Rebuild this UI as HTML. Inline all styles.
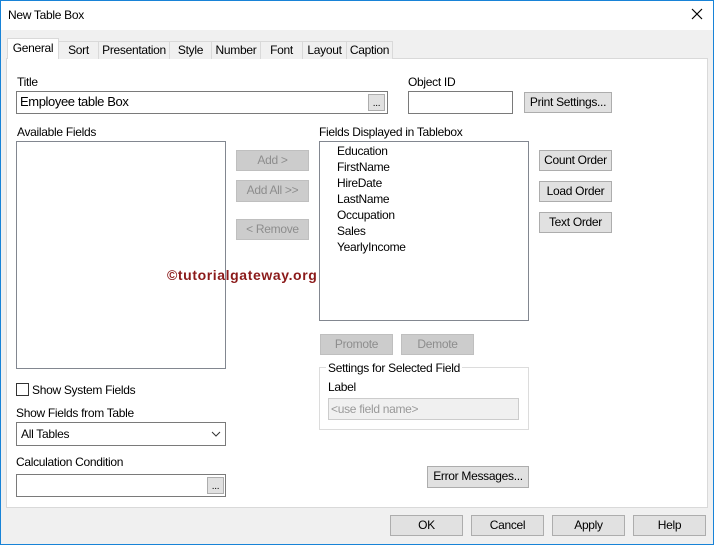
<!DOCTYPE html>
<html><head><style>
*{box-sizing:border-box}
body{margin:0;width:714px;height:545px;overflow:hidden;background:#f0f0f0;font-family:"Liberation Sans",sans-serif;font-size:12px;color:#000;position:relative;letter-spacing:-0.3px}
.a{position:absolute;white-space:nowrap}
.bx{position:absolute;background:#fff;border:1px solid #7a7a7a}
.btn{position:absolute;background:#e1e1e1;border:1px solid #adadad;text-align:center;line-height:18px}
.dis{position:absolute;background:#cccccc;border:1px solid #bfbfbf;color:#8d8d8d;text-align:center;line-height:18px}
.tab{position:absolute;top:41px;height:18px;border:1px solid #d9d9d9;border-bottom:none;background:#f0f0f0;line-height:17px;text-align:center}
</style></head><body>
<div class="a" style="left:0;top:0;width:714px;height:30px;background:#fff"></div>
<div class="a" style="left:0;top:0;width:714px;height:545px;border:1px solid #1883d7;z-index:10;pointer-events:none"></div>
<div class="a" style="left:8px;top:8px;font-size:12px">New Table Box</div>
<svg class="a" style="left:691px;top:8px" width="12" height="12"><path d="M1 1L11 11M11 1L1 11" stroke="#000" stroke-width="1.2"/></svg>

<div class="a" style="left:6px;top:58px;width:702px;height:450px;background:#fff;border:1px solid #d9d9d9"></div>
<div class="tab" style="left:58px;width:41px">Sort</div>
<div class="tab" style="left:98px;width:72px">Presentation</div>
<div class="tab" style="left:169px;width:43px">Style</div>
<div class="tab" style="left:211px;width:50px">Number</div>
<div class="tab" style="left:260px;width:43px">Font</div>
<div class="tab" style="left:302px;width:45px">Layout</div>
<div class="tab" style="left:346px;width:47px">Caption</div>
<div class="tab" style="left:7px;top:38px;width:52px;height:21px;background:#fff;line-height:18px;z-index:2">General</div>

<div class="a" style="left:17px;top:75px">Title</div>
<div class="bx" style="left:16px;top:91px;width:372px;height:23px"></div>
<div class="a" style="left:20px;top:94px;font-size:13px;letter-spacing:-0.4px">Employee table Box</div>
<div class="btn" style="left:368px;top:94px;width:17px;height:17px;line-height:17px;font-size:10px">...</div>

<div class="a" style="left:408px;top:75px">Object ID</div>
<div class="bx" style="left:408px;top:91px;width:105px;height:23px"></div>
<div class="btn" style="left:524px;top:92px;width:88px;height:21px">Print Settings...</div>

<div class="a" style="left:17px;top:125px">Available Fields</div>
<div class="bx" style="left:16px;top:141px;width:210px;height:228px;border-color:#828790"></div>

<div class="dis" style="left:236px;top:150px;width:73px;height:21px">Add &gt;</div>
<div class="dis" style="left:236px;top:180px;width:73px;height:22px">Add All &gt;&gt;</div>
<div class="dis" style="left:236px;top:219px;width:73px;height:21px">&lt; Remove</div>

<div class="a" style="left:319px;top:125px">Fields Displayed in Tablebox</div>
<div class="bx" style="left:319px;top:141px;width:210px;height:180px;border-color:#828790"></div>
<div class="a" style="left:337px;top:143px;line-height:16px">Education<br>FirstName<br>HireDate<br>LastName<br>Occupation<br>Sales<br>YearlyIncome</div>

<div class="btn" style="left:539px;top:150px;width:73px;height:21px">Count Order</div>
<div class="btn" style="left:539px;top:181px;width:73px;height:21px">Load Order</div>
<div class="btn" style="left:539px;top:212px;width:73px;height:21px">Text Order</div>

<div class="a" style="left:167px;top:267px;font-weight:bold;font-size:14px;color:#8b1a1a;letter-spacing:0.6px">©tutorialgateway.org</div>

<div class="dis" style="left:320px;top:334px;width:73px;height:21px">Promote</div>
<div class="dis" style="left:401px;top:334px;width:73px;height:21px">Demote</div>

<div class="a" style="left:319px;top:367px;width:210px;height:63px;border:1px solid #dcdcdc"></div>
<div class="a" style="left:326px;top:361px;background:#fff;padding:0 2px">Settings for Selected Field</div>
<div class="a" style="left:328px;top:380px">Label</div>
<div class="a" style="left:328px;top:398px;width:191px;height:22px;background:#f0f0f0;border:1px solid #ccc;color:#999;padding:3px 2px">&lt;use field name&gt;</div>

<div class="a" style="left:16px;top:383px;width:13px;height:13px;border:1px solid #333;background:#fff"></div>
<div class="a" style="left:32px;top:383px">Show System Fields</div>
<div class="a" style="left:16px;top:406px">Show Fields from Table</div>
<div class="bx" style="left:16px;top:422px;width:210px;height:24px"></div>
<div class="a" style="left:21px;top:427px">All Tables</div>
<svg class="a" style="left:211px;top:430px" width="10" height="8"><path d="M1 2L5 6L9 2" stroke="#333" fill="none"/></svg>
<div class="a" style="left:16px;top:455px">Calculation Condition</div>
<div class="bx" style="left:16px;top:474px;width:210px;height:23px"></div>
<div class="btn" style="left:207px;top:477px;width:17px;height:17px;line-height:17px;font-size:10px">...</div>

<div class="btn" style="left:427px;top:466px;width:102px;height:22px">Error Messages...</div>

<div class="btn" style="left:390px;top:515px;width:73px;height:21px">OK</div>
<div class="btn" style="left:471px;top:515px;width:73px;height:21px">Cancel</div>
<div class="btn" style="left:552px;top:515px;width:73px;height:21px">Apply</div>
<div class="btn" style="left:633px;top:515px;width:73px;height:21px">Help</div>
</body></html>
